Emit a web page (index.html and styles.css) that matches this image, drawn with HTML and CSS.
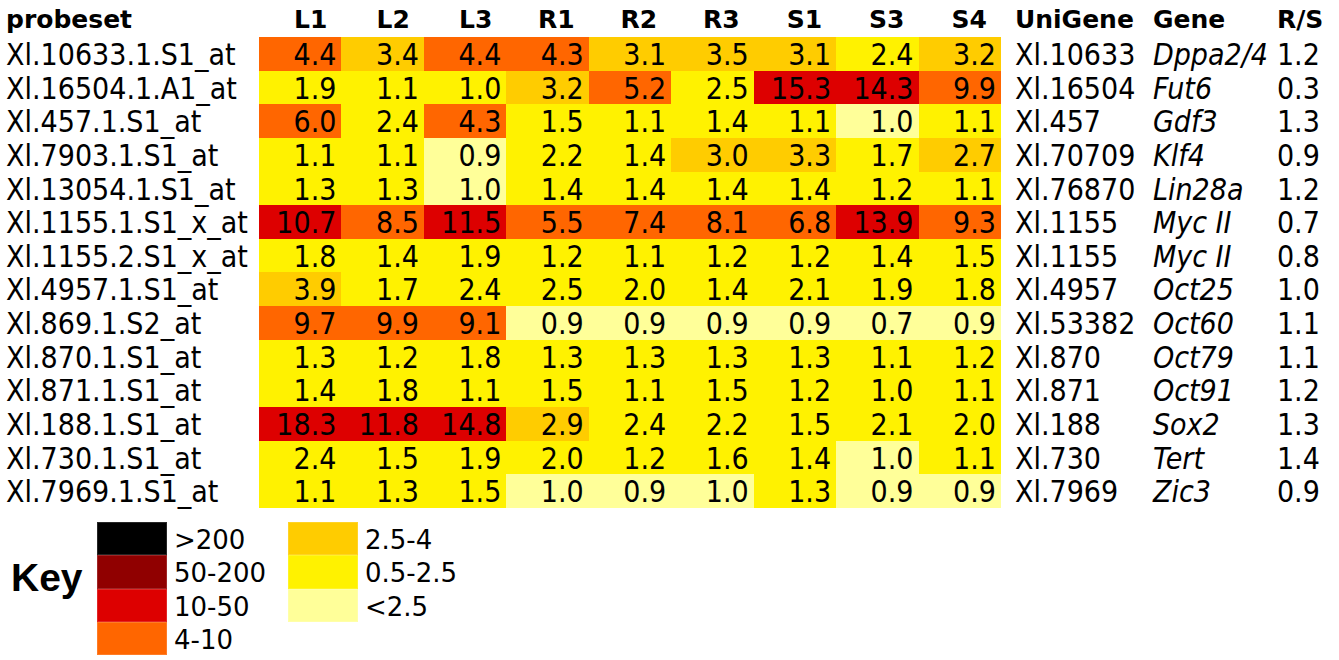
FILE: index.html
```html
<!DOCTYPE html>
<html>
<head>
<meta charset="utf-8">
<link rel="stylesheet" href="styles.css">
</head>
<body>
<div class="table">
  <div class="h first">probeset</div>
  <div class="h num">L1</div><div class="h num">L2</div><div class="h num">L3</div>
  <div class="h num">R1</div><div class="h num">R2</div><div class="h num">R3</div>
  <div class="h num">S1</div><div class="h num">S3</div><div class="h num">S4</div>
  <div class="h uni">UniGene</div><div class="h">Gene</div><div class="h">R/S</div>

  <div class="d lab">Xl.10633.1.S1_at</div>
  <div class="d v o">4.4</div><div class="d v g">3.4</div><div class="d v o">4.4</div><div class="d v o">4.3</div><div class="d v g">3.1</div><div class="d v g">3.5</div><div class="d v g">3.1</div><div class="d v y">2.4</div><div class="d v g">3.2</div>
  <div class="d uni">Xl.10633</div><div class="d gene">Dppa2/4</div><div class="d rs">1.2</div>

  <div class="d lab">Xl.16504.1.A1_at</div>
  <div class="d v y">1.9</div><div class="d v y">1.1</div><div class="d v y">1.0</div><div class="d v g">3.2</div><div class="d v o">5.2</div><div class="d v y">2.5</div><div class="d v r">15.3</div><div class="d v r">14.3</div><div class="d v o">9.9</div>
  <div class="d uni">Xl.16504</div><div class="d gene">Fut6</div><div class="d rs">0.3</div>

  <div class="d lab">Xl.457.1.S1_at</div>
  <div class="d v o">6.0</div><div class="d v y">2.4</div><div class="d v o">4.3</div><div class="d v y">1.5</div><div class="d v y">1.1</div><div class="d v y">1.4</div><div class="d v y">1.1</div><div class="d v p">1.0</div><div class="d v y">1.1</div>
  <div class="d uni">Xl.457</div><div class="d gene">Gdf3</div><div class="d rs">1.3</div>

  <div class="d lab">Xl.7903.1.S1_at</div>
  <div class="d v y">1.1</div><div class="d v y">1.1</div><div class="d v p">0.9</div><div class="d v y">2.2</div><div class="d v y">1.4</div><div class="d v g">3.0</div><div class="d v g">3.3</div><div class="d v y">1.7</div><div class="d v g">2.7</div>
  <div class="d uni">Xl.70709</div><div class="d gene">Klf4</div><div class="d rs">0.9</div>

  <div class="d lab">Xl.13054.1.S1_at</div>
  <div class="d v y">1.3</div><div class="d v y">1.3</div><div class="d v p">1.0</div><div class="d v y">1.4</div><div class="d v y">1.4</div><div class="d v y">1.4</div><div class="d v y">1.4</div><div class="d v y">1.2</div><div class="d v y">1.1</div>
  <div class="d uni">Xl.76870</div><div class="d gene">Lin28a</div><div class="d rs">1.2</div>

  <div class="d lab">Xl.1155.1.S1_x_at</div>
  <div class="d v r">10.7</div><div class="d v o">8.5</div><div class="d v r">11.5</div><div class="d v o">5.5</div><div class="d v o">7.4</div><div class="d v o">8.1</div><div class="d v o">6.8</div><div class="d v r">13.9</div><div class="d v o">9.3</div>
  <div class="d uni">Xl.1155</div><div class="d gene">Myc II</div><div class="d rs">0.7</div>

  <div class="d lab">Xl.1155.2.S1_x_at</div>
  <div class="d v y">1.8</div><div class="d v y">1.4</div><div class="d v y">1.9</div><div class="d v y">1.2</div><div class="d v y">1.1</div><div class="d v y">1.2</div><div class="d v y">1.2</div><div class="d v y">1.4</div><div class="d v y">1.5</div>
  <div class="d uni">Xl.1155</div><div class="d gene">Myc II</div><div class="d rs">0.8</div>

  <div class="d lab">Xl.4957.1.S1_at</div>
  <div class="d v g">3.9</div><div class="d v y">1.7</div><div class="d v y">2.4</div><div class="d v y">2.5</div><div class="d v y">2.0</div><div class="d v y">1.4</div><div class="d v y">2.1</div><div class="d v y">1.9</div><div class="d v y">1.8</div>
  <div class="d uni">Xl.4957</div><div class="d gene">Oct25</div><div class="d rs">1.0</div>

  <div class="d lab">Xl.869.1.S2_at</div>
  <div class="d v o">9.7</div><div class="d v o">9.9</div><div class="d v o">9.1</div><div class="d v p">0.9</div><div class="d v p">0.9</div><div class="d v p">0.9</div><div class="d v p">0.9</div><div class="d v p">0.7</div><div class="d v p">0.9</div>
  <div class="d uni">Xl.53382</div><div class="d gene">Oct60</div><div class="d rs">1.1</div>

  <div class="d lab">Xl.870.1.S1_at</div>
  <div class="d v y">1.3</div><div class="d v y">1.2</div><div class="d v y">1.8</div><div class="d v y">1.3</div><div class="d v y">1.3</div><div class="d v y">1.3</div><div class="d v y">1.3</div><div class="d v y">1.1</div><div class="d v y">1.2</div>
  <div class="d uni">Xl.870</div><div class="d gene">Oct79</div><div class="d rs">1.1</div>

  <div class="d lab">Xl.871.1.S1_at</div>
  <div class="d v y">1.4</div><div class="d v y">1.8</div><div class="d v y">1.1</div><div class="d v y">1.5</div><div class="d v y">1.1</div><div class="d v y">1.5</div><div class="d v y">1.2</div><div class="d v y">1.0</div><div class="d v y">1.1</div>
  <div class="d uni">Xl.871</div><div class="d gene">Oct91</div><div class="d rs">1.2</div>

  <div class="d lab">Xl.188.1.S1_at</div>
  <div class="d v r">18.3</div><div class="d v r">11.8</div><div class="d v r">14.8</div><div class="d v g">2.9</div><div class="d v y">2.4</div><div class="d v y">2.2</div><div class="d v y">1.5</div><div class="d v y">2.1</div><div class="d v y">2.0</div>
  <div class="d uni">Xl.188</div><div class="d gene">Sox2</div><div class="d rs">1.3</div>

  <div class="d lab">Xl.730.1.S1_at</div>
  <div class="d v y">2.4</div><div class="d v y">1.5</div><div class="d v y">1.9</div><div class="d v y">2.0</div><div class="d v y">1.2</div><div class="d v y">1.6</div><div class="d v y">1.4</div><div class="d v p">1.0</div><div class="d v y">1.1</div>
  <div class="d uni">Xl.730</div><div class="d gene">Tert</div><div class="d rs">1.4</div>

  <div class="d lab">Xl.7969.1.S1_at</div>
  <div class="d v y">1.1</div><div class="d v y">1.3</div><div class="d v y">1.5</div><div class="d v p">1.0</div><div class="d v p">0.9</div><div class="d v p">1.0</div><div class="d v y">1.3</div><div class="d v p">0.9</div><div class="d v p">0.9</div>
  <div class="d uni">Xl.7969</div><div class="d gene">Zic3</div><div class="d rs">0.9</div>
</div>

<div class="key">
  <div class="key-title">Key</div>
  <div class="legend legend-first">
    <div class="sw k"></div><div class="kl">&gt;200</div>
    <div class="sw dr"></div><div class="kl">50-200</div>
    <div class="sw r"></div><div class="kl">10-50</div>
    <div class="sw o"></div><div class="kl">4-10</div>
  </div>
  <div class="legend">
    <div class="sw g"></div><div class="kl">2.5-4</div>
    <div class="sw y"></div><div class="kl">0.5-2.5</div>
    <div class="sw p"></div><div class="kl">&lt;2.5</div>
  </div>
</div>
</body>
</html>
```

FILE: styles.css
```css
html, body {
  margin: 0;
  padding: 0;
  background: #ffffff;
  color: #000000;
}

.table {
  display: grid;
  grid-template-columns: 259px repeat(9, 82.44px) 152px 124px 1fr;
  grid-template-rows: 37px repeat(14, 33.65px);
}

.h {
  font-family: "DejaVu Sans", Verdana, sans-serif;
  font-weight: bold;
  font-size: 25px;
  line-height: 37px;
  padding-top: 1px;
  white-space: nowrap;
}
.h.first { padding-left: 6px; }
.h.num { text-align: right; padding-right: 14px; }
.h.uni { padding-left: 14px; }

.d {
  font-family: "DejaVu Sans Condensed", "DejaVu Sans", sans-serif;
  font-stretch: condensed;
  font-size: 30px;
  line-height: 35px;
  white-space: nowrap;
}
.lab { padding-left: 6px; }
.v { text-align: right; padding-right: 5px; }
.uni { padding-left: 14px; }
.gene { font-style: italic; }
.rs { padding-left: 0; }

.o { background: #ff6600; }
.g { background: #ffcc00; }
.y { background: #fff200; }
.p { background: #ffff99; }
.r { background: #dd0000; }
.dr { background: #900000; }
.k { background: #000000; }

.key {
  display: flex;
  margin-top: 14px;
}
.key-title {
  width: 97px;
  box-sizing: border-box;
  padding-left: 11px;
  padding-top: 36px;
  font-family: "Liberation Sans", Arial, sans-serif;
  font-weight: bold;
  font-size: 39px;
  line-height: 1;
}
.legend {
  display: grid;
  grid-template-columns: 70px auto;
  grid-auto-rows: 33.3px;
  column-gap: 7px;
  align-content: start;
}
.legend-first { width: 191px; }
.sw { box-shadow: inset 0 0 0 1px rgba(255,255,255,0.15); }
.kl {
  font-family: "DejaVu Sans", Verdana, sans-serif;
  font-size: 26px;
  line-height: 33.3px;
  padding-top: 2px;
  white-space: nowrap;
}
```
